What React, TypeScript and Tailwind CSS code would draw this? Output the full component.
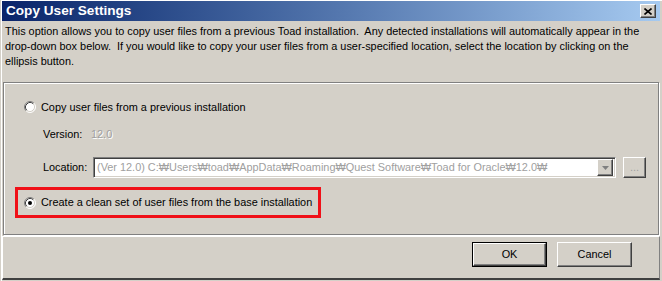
import React from "react"

const raised =
  "border border-t-white border-l-white border-r-[#404040] border-b-[#404040] shadow-[inset_-1px_-1px_0_#808080]"
const sunken =
  "border border-t-[#808080] border-l-[#808080] border-r-white border-b-white shadow-[inset_1px_1px_0_#404040,inset_-1px_-1px_0_#D4D0C8]"

const Radio: React.FC<{ checked?: boolean }> = ({ checked }) => (
  <svg width="12" height="12" viewBox="0 0 12 12" className="shrink-0">
    <circle cx="6" cy="6" r="5" fill="#fff" />
    <path d="M2.11 9.89 A5.5 5.5 0 0 1 9.89 2.11" fill="none" stroke="#808080" />
    <path d="M9.89 2.11 A5.5 5.5 0 0 1 2.11 9.89" fill="none" stroke="#fff" />
    <path d="M2.82 9.18 A4.5 4.5 0 0 1 9.18 2.82" fill="none" stroke="#404040" />
    <path d="M9.18 2.82 A4.5 4.5 0 0 1 2.82 9.18" fill="none" stroke="#D4D0C8" />
    {checked && <circle cx="6" cy="6" r="2" fill="#000" />}
  </svg>
)

const Button: React.FC<{ label: string; isDefault?: boolean }> = ({ label, isDefault }) => {
  if (isDefault) {
    return (
      <div className="w-[75px] h-[25px] border border-black">
        <div className={`w-full h-full flex items-center justify-center ${raised}`}>{label}</div>
      </div>
    )
  }
  return <div className={`w-[75px] h-[25px] flex items-center justify-center ${raised}`}>{label}</div>
}

export default function App() {
  return (
    <div className="w-[662px] h-[281px] bg-[#D4D0C8] pl-px overflow-hidden font-['Liberation_Sans',Arial,sans-serif] text-[10.9px] text-black">
      <div className="h-full flex flex-col border-l border-t border-white pr-[2px]">
        {/* title bar */}
        <div className="h-[20px] shrink-0 flex items-center justify-between bg-gradient-to-r from-[#0A246A] to-[#A6CAF0] pl-[4px] pr-[4px]">
          <span className="text-white font-bold text-[13.6px] leading-none">Copy User Settings</span>
          <div className={`w-[16px] h-[14px] bg-[#D4D0C8] flex items-center justify-center ${raised}`}>
            <svg width="8" height="7" viewBox="0 0 8 7">
              <path d="M0.5 0.5 L7.5 6.5 M7.5 0.5 L0.5 6.5" stroke="#000" strokeWidth="1.6" />
            </svg>
          </div>
        </div>

        {/* description */}
        <div className="pt-[3px] pl-[3px] leading-[15px] whitespace-pre">
          <div>This option allows you to copy user files from a previous Toad installation.  Any detected installations will automatically appear in the</div>
          <div>drop-down box below.  If you would like to copy your user files from a user-specified location, select the location by clicking on the</div>
          <div>ellipsis button.</div>
        </div>

        {/* group box */}
        <div className="mt-[13px] mx-px h-[153px] shrink-0 border border-[#808080] shadow-[inset_1px_1px_0_#fff,1px_1px_0_#fff] pl-[20px]">
          <div className="mt-[16px] h-[16px] flex items-center gap-[5px]">
            <Radio />
            <span>Copy user files from a previous installation</span>
          </div>
          <div className="mt-[11px] h-[16px] flex items-center pl-[19px]">
            <span className="w-[48px]">Version:</span>
            <span className="text-[#a0a0a0] [text-shadow:1px_1px_0_#fff]">12.0</span>
          </div>
          <div className="mt-[15px] h-[21px] flex items-center pl-[19px]">
            <span className="w-[50px]">Location:</span>
            <div className={`w-[523px] h-[21px] bg-white flex items-center justify-between pl-[3px] pr-[2px] ${sunken}`}>
              <span className="text-[#a0a0a0] whitespace-pre">(Ver 12.0) C:₩Users₩toad₩AppData₩Roaming₩Quest Software₩Toad for Oracle₩12.0₩</span>
              <div className={`w-[16px] h-[17px] bg-[#D4D0C8] flex items-center justify-center ${raised}`}>
                <svg width="7" height="4" viewBox="0 0 7 4">
                  <path d="M0 0 H7 L3.5 4 Z" fill="#808080" />
                </svg>
              </div>
            </div>
            <div className={`ml-[7px] w-[23px] h-[21px] flex items-center justify-center text-[#a0a0a0] ${raised}`}>...</div>
          </div>
          <div className="mt-[9px] -ml-[9px] w-[306px] h-[31px] border-[3px] border-[#f01018] flex items-center gap-[5px] pl-[6px]">
            <Radio checked />
            <span>Create a clean set of user files from the base installation</span>
          </div>
        </div>

        {/* buttons panel */}
        <div className="mt-px h-[44px] shrink-0 border-t border-l border-white border-r border-r-[#808080] border-b-2 border-b-[#404040] flex items-start justify-end gap-[10px] pt-[5px] pr-[27px]">
          <Button label="OK" isDefault />
          <Button label="Cancel" />
        </div>
      </div>
    </div>
  )
}
